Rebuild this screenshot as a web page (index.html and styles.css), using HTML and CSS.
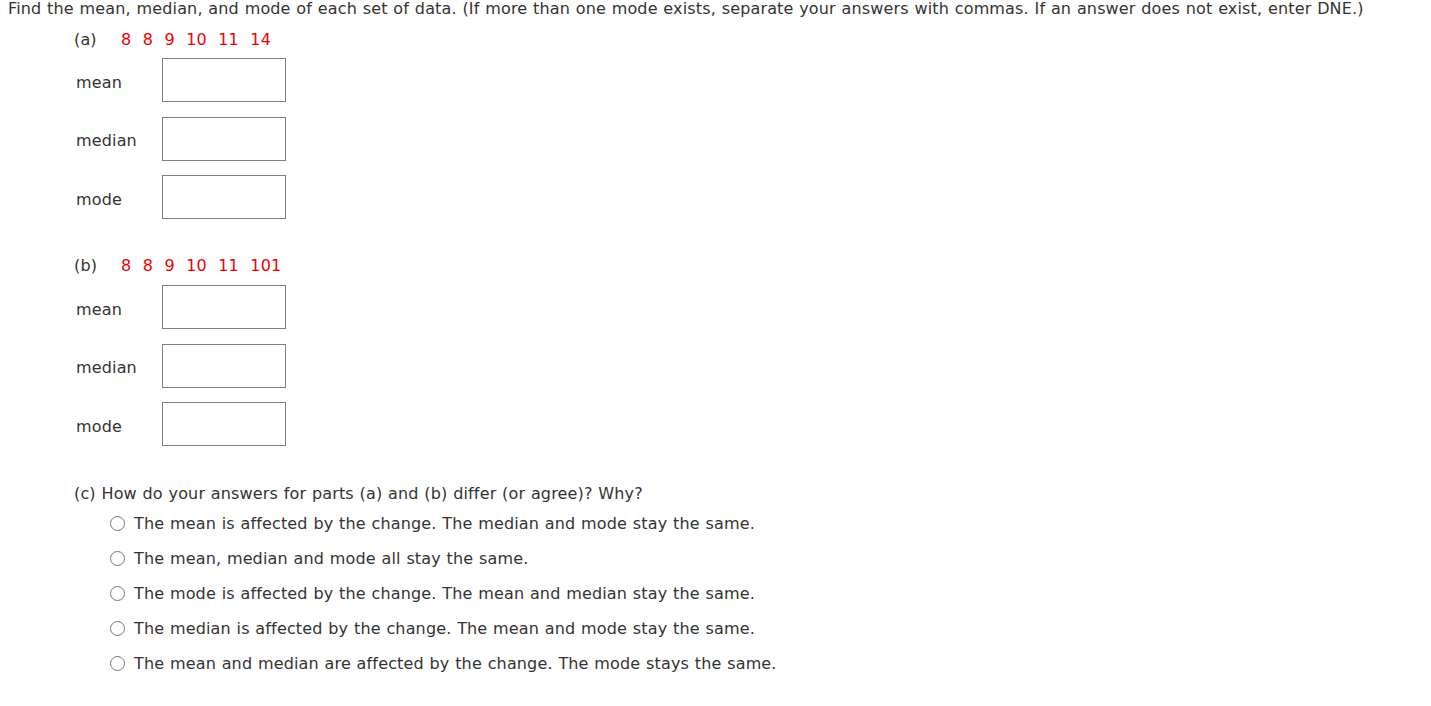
FILE: index.html
```html
<html>
	<head>
		<link rel="stylesheet" href="styles.css">
	</head>
	<body>
		<div class="prompt">Find the mean, median, and mode of each set of data. (If more than one mode exists, separate your answers with commas. If an answer does not exist, enter DNE.)</div>

		<div class="part part-a">
			<div class="part-head">
				<span class="part-label">(a)</span>
				<span class="data"><span>8</span><span>8</span><span>9</span><span>10</span><span>11</span><span>14</span></span>
			</div>
			<div class="answers">
				<div class="answer-row"><span class="answer-label">mean</span><span class="answer-box"></span></div>
				<div class="answer-row"><span class="answer-label">median</span><span class="answer-box"></span></div>
				<div class="answer-row"><span class="answer-label">mode</span><span class="answer-box"></span></div>
			</div>
		</div>

		<div class="part part-b">
			<div class="part-head">
				<span class="part-label">(b)</span>
				<span class="data"><span>8</span><span>8</span><span>9</span><span>10</span><span>11</span><span>101</span></span>
			</div>
			<div class="answers">
				<div class="answer-row"><span class="answer-label">mean</span><span class="answer-box"></span></div>
				<div class="answer-row"><span class="answer-label">median</span><span class="answer-box"></span></div>
				<div class="answer-row"><span class="answer-label">mode</span><span class="answer-box"></span></div>
			</div>
		</div>

		<div class="part part-c">
			<div class="part-head">(c) How do your answers for parts (a) and (b) differ (or agree)? Why?</div>
			<div class="choices">
				<div class="choice"><span class="radio"></span>The mean is affected by the change. The median and mode stay the same.</div>
				<div class="choice"><span class="radio"></span>The mean, median and mode all stay the same.</div>
				<div class="choice"><span class="radio"></span>The mode is affected by the change. The mean and median stay the same.</div>
				<div class="choice"><span class="radio"></span>The median is affected by the change. The mean and mode stay the same.</div>
				<div class="choice"><span class="radio"></span>The mean and median are affected by the change. The mode stays the same.</div>
			</div>
		</div>
	</body>
</html>
```

FILE: styles.css
```css
body {
	margin: 0;
	background: #fff;
	color: #333;
	font-family: Verdana, "DejaVu Sans", sans-serif;
	font-size: 16px;
	line-height: 20px;
	letter-spacing: 0.15px;
	word-spacing: 0.5px;
}

.prompt {
	padding-left: 8px;
	line-height: 17px;
}

.part {
	margin-left: 74px;
}

.part-a {
	margin-top: 13px;
}

.part-b {
	margin-top: 37px;
}

.part-c {
	margin-top: 38px;
}

.part-head {
	display: flex;
	align-items: center;
	height: 20px;
}

.part-label {
	width: 47px;
}

.data {
	display: flex;
	gap: 11.4px;
	color: #e00;
}

.answers {
	display: flex;
	flex-direction: column;
	gap: 14.5px;
	margin-top: 8px;
	margin-left: 2px;
}

.part-b .answers {
	margin-top: 9px;
}

.answer-row {
	display: flex;
	align-items: center;
}

.answer-label {
	width: 86px;
	padding-top: 5px;
}

.answer-box {
	width: 124px;
	height: 44px;
	box-sizing: border-box;
	border: 1px solid #808080;
	background: #fff;
}

.choices {
	margin-top: 2px;
	margin-left: 36px;
}

.choice {
	display: flex;
	align-items: center;
	height: 35px;
}

.radio {
	width: 15px;
	height: 15px;
	box-sizing: border-box;
	border: 1.5px solid #767676;
	border-radius: 50%;
	margin-right: 9px;
}
```
